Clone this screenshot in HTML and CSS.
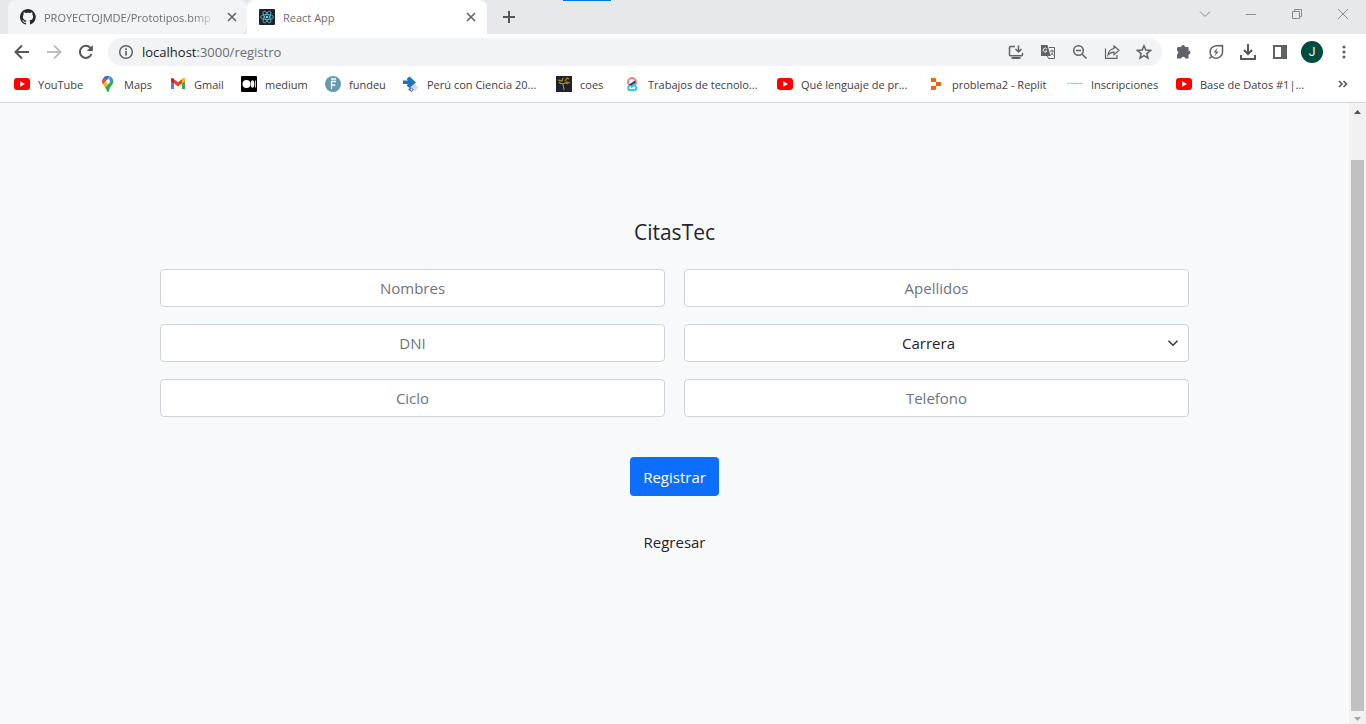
FILE: index.html
```html
<!DOCTYPE html>
<html lang="es">
<head>
<meta charset="utf-8">
<meta name="viewport" content="width=device-width, initial-scale=1">
<title>React App</title>
<link rel="stylesheet" href="styles.css">
</head>
<body class="window">
<svg class="defs" aria-hidden="true">
  <symbol id="youtube" viewBox="0 0 16 16"><rect y="2" width="16" height="12" rx="3" fill="#f00"/><path d="M6.200 5.300v5.400L11 8z" fill="#fff"/></symbol>
  <symbol id="close" viewBox="0 0 12 12"><path d="M2 2l8 8M10 2l-8 8" fill="none" stroke="#5f6368" stroke-width="1.600"/></symbol>
</svg>

<header class="tabstrip">
  <div class="tab">
    <svg class="icon16" viewBox="0 0 16 16" aria-hidden="true"><path fill="#24292f" d="M8 0C3.600 0 0 3.600 0 8c0 3.500 2.300 6.500 5.500 7.600.4.100.5-.2.5-.4v-1.400c-2.200.5-2.700-1-2.700-1-.4-.9-.9-1.200-.9-1.200-.7-.5.1-.5.1-.5.8.1 1.200.8 1.200.8.7 1.200 1.900.9 2.300.7.100-.5.300-.9.500-1.100-1.800-.2-3.600-.9-3.600-4 0-.9.300-1.600.8-2.100-.1-.2-.4-1 .1-2.100 0 0 .7-.2 2.200.8a7.500 7.500 0 0 1 4 0c1.500-1 2.200-.8 2.200-.8.4 1.100.2 1.900.1 2.100.5.600.8 1.300.8 2.100 0 3.100-1.900 3.700-3.700 3.900.3.300.6.800.6 1.500v2.200c0 .2.100.5.500.4A8 8 0 0 0 8 0z"/></svg>
    <span class="tab-title faded">PROYECTOJMDE/Prototipos.bmp</span>
    <button class="tab-close" aria-label="Cerrar pestaña"><svg width="12" height="12"><use href="#close"/></svg></button>
  </div>
  <div class="tab active">
    <svg class="icon16" viewBox="0 0 16 16" aria-hidden="true"><rect width="16" height="16" rx="1" fill="#20232a"/><g fill="none" stroke="#5dbfd8" stroke-width=".8"><ellipse cx="8" cy="8" rx="6.500" ry="2.500"/><ellipse cx="8" cy="8" rx="6.500" ry="2.500" transform="rotate(60 8 8)"/><ellipse cx="8" cy="8" rx="6.500" ry="2.500" transform="rotate(120 8 8)"/></g><circle cx="8" cy="8" r="1.300" fill="#61dafb"/></svg>
    <span class="tab-title">React App</span>
    <button class="tab-close" aria-label="Cerrar pestaña"><svg width="12" height="12"><use href="#close"/></svg></button>
  </div>
  <button class="new-tab" aria-label="Nueva pestaña"><svg width="14" height="14" viewBox="0 0 14 14"><path d="M7 1v12M1 7h12" stroke="#53565a" stroke-width="2"/></svg></button>
  <div class="loading-mark"></div>
  <div class="window-controls">
    <button aria-label="Buscar pestañas"><svg width="12" height="12" viewBox="0 0 12 12"><path d="M1 3.500l5 5 5-5"/></svg></button>
    <button aria-label="Minimizar"><svg width="12" height="12" viewBox="0 0 12 12"><path d="M1 6.500h10"/></svg></button>
    <button aria-label="Restaurar"><svg width="12" height="12" viewBox="0 0 12 12"><path d="M1.500 3.500h7v7h-7zM3.500 3.500v-2h7v7h-2"/></svg></button>
    <button aria-label="Cerrar"><svg width="12" height="12" viewBox="0 0 12 12"><path d="M1 1l10 10M11 1L1 11"/></svg></button>
  </div>
</header>

<nav class="toolbar" aria-label="Navegación">
  <button class="tool" aria-label="Atrás"><svg class="line bold" viewBox="0 0 16 16"><path d="M15 8H2M8 1.500L1.500 8 8 14.500"/></svg></button>
  <button class="tool" aria-label="Adelante"><svg class="line bold dim" viewBox="0 0 16 16"><path d="M1 8h13M8 1.500L14.500 8 8 14.500"/></svg></button>
  <button class="tool" aria-label="Recargar"><svg class="line bold" viewBox="0 0 16 16"><path d="M13.500 10A6 6 0 1 1 12.300 3.800L14 5.500"/><path d="M14.800 1v6h-6z" fill="#54575b" stroke="none"/></svg></button>
  <div class="omnibox">
    <button class="tool" aria-label="Información del sitio"><svg class="line" viewBox="0 0 16 16"><circle cx="8" cy="8" r="6.300"/><path d="M8 7v4.500M8 4.200v1.700" stroke-width="1.700"/></svg></button>
    <div class="address"><span class="host">localhost</span>:3000/registro</div>
    <button class="tool" aria-label="Instalar"><svg class="line" viewBox="0 0 16 16"><path d="M7 2.500H2.500a1 1 0 0 0-1 1v7.200a1 1 0 0 0 1 1h11a1 1 0 0 0 1-1V9M10.500 1.500v6M7.500 5l3 3 3-3"/><path d="M3.500 14h9" stroke-width="2"/></svg></button>
    <button class="tool" aria-label="Traducir"><svg class="line" viewBox="0 0 16 16"><path d="M1 1h6.500l3 11H1z" fill="#5f6368" stroke="none"/><path d="M9 3.500h5.500v11H8.500L7.500 12" stroke-width="1"/><path d="M9.800 7h4M12 5.800V7M10 11.500c1.500-.8 2.600-2.200 3-4.500M11 8.500l2.700 3" stroke-width=".9"/><path d="M6.800 4.800A2 2 0 1 0 7 7H5.200" stroke="#f1f3f4" stroke-width="1"/></svg></button>
    <button class="tool" aria-label="Zoom"><svg class="line" viewBox="0 0 16 16"><circle cx="6.500" cy="6.500" r="4.800"/><path d="M10 10l4.500 4.500M4 6.500h5"/></svg></button>
    <button class="tool" aria-label="Compartir"><svg class="line thin" viewBox="0 0 16 16"><path d="M1.500 4.500v9.800h11.500V11"/><path d="M10 2l5 4.300-5 4.300V8.200C7.500 8.200 5.500 9 4 11c.4-3.300 2.500-6 6-6.500z"/></svg></button>
    <button class="tool" aria-label="Favorito"><svg class="line" viewBox="0 0 16 16"><path d="M8 1.800l1.800 4.300 4.700.4-3.600 3.100 1.100 4.600-4-2.500-4 2.500 1.100-4.600-3.600-3.100 4.700-.4z"/></svg></button>
  </div>
  <div class="actions">
    <button class="tool" aria-label="Extensiones"><svg class="solid" viewBox="0 0 16 16"><path d="M2 3h3.200a1.900 1.900 0 0 1 3.800 0h3.500v3.600a1.900 1.900 0 0 1 0 3.800v4.100H9.300a2.100 2.100 0 0 0-4.100 0H1v-4a2.100 2.100 0 0 0 0-3.900V4z"/></svg></button>
    <button class="tool" aria-label="Rendimiento"><svg class="line" viewBox="0 0 16 16"><path d="M14.500 1.500v6.500A6.200 6.200 0 1 1 8 1.800zM3.500 12.500l-2 2"/><path d="M9.500 3.800L5.500 8.500H8l-1.500 4 4.200-5H8.200z" fill="#5f6368" stroke="none"/></svg></button>
    <button class="tool" aria-label="Descargas"><svg class="line bold" viewBox="0 0 16 16"><path d="M8 0v9.500M4 6l4 4 4-4M1 11v4h14v-4"/></svg></button>
    <button class="tool" aria-label="Panel lateral"><svg class="solid" viewBox="0 0 16 16"><path fill-rule="evenodd" d="M1 1h14v14H1zM3 3v10h6V3z"/></svg></button>
    <button class="tool" aria-label="Perfil"><span class="avatar">J</span></button>
    <button class="tool" aria-label="Menú"><svg class="solid" viewBox="0 0 16 16"><circle cx="8" cy="3" r="1.600"/><circle cx="8" cy="8" r="1.600"/><circle cx="8" cy="13" r="1.600"/></svg></button>
  </div>
</nav>

<nav class="bookmarks" aria-label="Marcadores">
  <a href="#"><svg class="icon16"><use href="#youtube"/></svg>YouTube</a>
  <a href="#"><svg class="icon16" viewBox="0 0 16 16"><path d="M3.300 2A5.500 5.500 0 0 1 9.800.3L6.400 4.400z" fill="#1a73e8"/><path d="M3.300 2l3.100 2.400L3 8.400A5.500 5.500 0 0 1 3.300 2z" fill="#ea4335"/><path d="M9.800.3a5.500 5.500 0 0 1 3.300 3L9.600 7 6.400 4.400z" fill="#4285f4"/><path d="M3 8.400L9.600.8l-.1 6.200L5 11.700z" fill="#fbbc04"/><path d="M13.100 3.300c1.500 4.700-2.700 6-4 10.900-.2 1.200-.5 1.800-1 1.800-1.300 0-.8-2-3.100-4.300z" fill="#34a853"/><circle cx="8" cy="5.600" r="2" fill="#fff"/></svg>Maps</a>
  <a href="#"><svg class="icon16" viewBox="0 0 16 16"><path d="M1 4v9h3V6z" fill="#4285f4"/><path d="M12 6v7h3V4z" fill="#34a853"/><path d="M1 3.500C1 2 2.500 2 3.200 2.500L8 6.200l4.800-3.700C13.500 2 15 2 15 3.500v1.800L8 10.500 1 5.300z" fill="#ea4335"/><path d="M12 3.100l.8-.6C13.500 2 15 2 15 3.500v1.800l-3 2.200z" fill="#fbbc04"/><path d="M1 3.500C1 2 2.500 2 3.200 2.500l.8.6v4.400L1 5.300z" fill="#c5221f"/></svg>Gmail</a>
  <a href="#"><svg class="icon16" viewBox="0 0 16 16"><rect width="16" height="16" rx="1"/><circle cx="5.500" cy="8" r="4" fill="#fff"/><ellipse cx="11.500" cy="8" rx="1.800" ry="3.800" fill="#eee"/><path d="M14.500 4.500v7" stroke="#ccc"/></svg>medium</a>
  <a href="#"><svg class="icon16" viewBox="0 0 16 16"><circle cx="8" cy="8" r="8" fill="#6799ac"/><path d="M6.500 13V5.500H11M6.500 9h3.800M6 3h5" fill="none" stroke="#fff" stroke-width="1.300"/></svg>fundeu</a>
  <a href="#"><svg class="icon16" viewBox="0 0 16 16"><path d="M12 8v7M9 11h6M10 9l4 4" stroke="#ccd2df" stroke-width="1.500"/><path d="M0 4.500h5L3.500 3l3-2.500L13 6.500 6.500 12l-3-2.500L5 8H0z" fill="#1c75bc"/><path d="M8 11l3 2.500L8.500 16 5 13.500z" fill="#5865ad"/><circle cx="8.500" cy="13.500" r="1" fill="#fff"/></svg>Perú con Ciencia 20...</a>
  <a href="#"><svg class="icon16" viewBox="0 0 16 16"><rect width="16" height="16" fill="#1d2130"/><path d="M8 14l-1-6-3-1M7 8l4-2 3 1M2 4l4 1 1-3M9 5l2-3 2 1M3 6l2 2M10 7l2 1" fill="none" stroke="#b18a20" stroke-width="1.200"/></svg>coes</a>
  <a href="#"><svg class="icon16" viewBox="0 0 16 16"><circle cx="8" cy="6" r="4" fill="none" stroke="#ff7f80" stroke-width="2"/><path d="M4.500 9L11 4.500c1.800 2.500-1 4-4 5z" fill="#263f51"/><path d="M5.500 9.500c-2 1.500-1.500 4.500 0 4.500h5c2.500 0 2-4-.5-5.500L7 11.500" fill="none" stroke="#16cdf5" stroke-width="2"/></svg>Trabajos de tecnolo...</a>
  <a href="#"><svg class="icon16"><use href="#youtube"/></svg>Qué lenguaje de pr...</a>
  <a href="#"><svg class="icon16" viewBox="0 0 16 16"><path d="M3 2h4q1 0 1 1v3H3zM8 6h5v4H8zM3 10h5v3q0 1-1 1H3z" fill="#f26207"/></svg>problema2 - Replit</a>
  <a href="#"><svg class="icon16" viewBox="0 0 16 16"><path d="M0 7.500h16" stroke="#a9dcf2" stroke-width="1.500"/><path d="M5 7.500h10" stroke="#75c5e5" stroke-dasharray="1 1"/></svg>Inscripciones</a>
  <a href="#"><svg class="icon16"><use href="#youtube"/></svg>Base de Datos #1|...</a>
  <button class="tool" aria-label="Más marcadores"><svg class="line bold" viewBox="0 0 16 16"><path d="M4 5l3 3-3 3M8.500 5l3 3-3 3" stroke-width="1.600"/></svg></button>
</nav>

<div class="viewport">
  <main class="page">
    <form class="register">
      <h1>CitasTec</h1>
      <div class="fields">
        <input type="text" placeholder="Nombres" aria-label="Nombres">
        <input type="text" placeholder="Apellidos" aria-label="Apellidos">
        <input type="text" placeholder="DNI" aria-label="DNI">
        <div class="select-wrap">
          <select aria-label="Carrera"><option>Carrera</option></select>
          <svg class="chevron" viewBox="0 0 16 16" aria-hidden="true"><path d="M2 5l6 6 6-6"/></svg>
        </div>
        <input type="text" placeholder="Ciclo" aria-label="Ciclo">
        <input type="tel" placeholder="Telefono" aria-label="Telefono">
      </div>
      <button class="submit" type="button">Registrar</button>
      <a class="back" href="#">Regresar</a>
    </form>
  </main>
  <div class="scrollbar" aria-hidden="true">
    <svg width="17" height="17" viewBox="0 0 17 17"><path d="M5 11l3.500-4 3.500 4z" fill="#505050"/></svg>
    <div class="track"><div class="thumb"></div></div>
    <svg width="17" height="13" viewBox="0 0 17 13"><path d="M5 6h7l-3.500 4z" fill="#a3a3a3"/></svg>
  </div>
</div>
</body>
</html>
```

FILE: styles.css
```css
*, *::before, *::after { box-sizing: border-box; }

.window {
  margin: 0;
  min-height: 100vh;
  display: flex;
  flex-direction: column;
  background: #fff;
  color: #212529;
  font-family: "Open Sans", "Noto Sans", sans-serif;
  font-size: 11px;
}

.defs { position: absolute; width: 0; height: 0; }

button {
  border: 0;
  padding: 0;
  background: none;
  font: inherit;
  color: inherit;
}

a { color: inherit; text-decoration: none; }

.icon16 { flex: none; width: 16px; height: 16px; }

/* Tab strip */
.tabstrip {
  position: relative;
  display: flex;
  height: 34px;
  padding-left: 8px;
  background: #e7e8ec;
}

.tab {
  display: flex;
  align-items: center;
  gap: 8px;
  width: 239px;
  padding: 0 9px 0 12px;
  border-radius: 8px 8px 8px 0;
  background: #f3f4f6;
  color: #6b6e73;
}

.tab.active {
  width: 240px;
  padding-right: 10px;
  border-radius: 8px 8px 0 0;
  background: #fff;
}

.tab-title { flex: 1; min-width: 0; white-space: nowrap; }
.faded { mask-image: linear-gradient(90deg, #000 85%, transparent); }
.tab-close { display: flex; }
.new-tab { display: flex; align-items: center; padding: 0 15px; }

.loading-mark {
  position: absolute;
  top: 0;
  left: 563px;
  width: 48px;
  height: 1px;
  background: #0078d7;
}

.window-controls { display: flex; height: 28px; margin-left: auto; }
.window-controls button { display: grid; place-items: center; width: 46px; }
.window-controls path { fill: none; stroke: #8b8c90; }

/* Toolbar */
.toolbar { display: flex; align-items: center; height: 36px; padding: 0 6px; }

.tool { flex: none; display: grid; place-items: center; width: 32px; height: 28px; }
.tool svg { width: 16px; height: 16px; }

.line { fill: none; stroke: #5f6368; stroke-width: 1.5; }
.bold { stroke: #54575b; stroke-width: 2; }
.thin { stroke-width: 1.2; }
.dim { stroke: #bbbdbf; }
.solid { fill: #5f6368; }

.omnibox {
  flex: 1;
  display: flex;
  align-items: center;
  height: 28px;
  margin: 0 6px;
  padding: 0 2px;
  border-radius: 14px;
  background: #f1f3f4;
}

.address { flex: 1; font-size: 13px; color: #6b6e73; }
.host { color: #202124; }
.actions { display: flex; }

.avatar {
  display: grid;
  place-items: center;
  width: 22px;
  height: 22px;
  border-radius: 50%;
  background: #004d40;
  color: #fff;
  font-family: Roboto, sans-serif;
  font-size: 12px;
}

/* Bookmarks */
.bookmarks {
  display: grid;
  grid-template-columns: 86px 70px 71px 84px 78px 153px 68px 153px 151px 139px 109px 1fr 32px;
  align-items: center;
  height: 33px;
  padding: 0 7px 4px 14px;
  border-bottom: 1px solid #d9dbde;
  color: #3c4043;
}

.bookmarks a { display: flex; align-items: center; gap: 8px; white-space: nowrap; }

/* Page */
.viewport { flex: 1; display: flex; }
.page { flex: 1; background: #f8f9fb; }

.register {
  display: flex;
  flex-direction: column;
  align-items: center;
  padding: 113px 160px 32px;
  font-size: 15px;
  line-height: 24px;
}

.register h1 {
  margin: 0 0 21px;
  font-size: 21px;
  font-weight: 500;
  line-height: 32px;
}

.fields {
  display: grid;
  grid-template-columns: 1fr 1fr;
  gap: 17px 19px;
  align-self: stretch;
}

.fields input,
.fields select {
  width: 100%;
  height: 38px;
  padding: 0 12px;
  border: 1px solid #ced4da;
  border-radius: 4px;
  background: #fff;
  color: #212529;
  font: inherit;
  text-align: center;
}

.fields input::placeholder { color: #6c757d; opacity: 1; }

.select-wrap { position: relative; }
.fields select { appearance: none; padding-right: 28px; text-align-last: center; }

.chevron {
  position: absolute;
  top: 13px;
  right: 10px;
  width: 12px;
  height: 12px;
  fill: none;
  stroke: #343a40;
  stroke-width: 2;
  pointer-events: none;
}

.submit {
  height: 39px;
  margin: 40px 0 34px;
  padding: 0 13px;
  border-radius: 4px;
  background: #0d6efd;
  color: #fff;
}

/* Scrollbar */
.scrollbar { display: flex; flex-direction: column; width: 17px; background: #f1f1f1; }
.track { flex: 1; display: flex; padding: 40px 2px 0; }
.thumb { flex: 1; background: #c1c1c1; }
```
